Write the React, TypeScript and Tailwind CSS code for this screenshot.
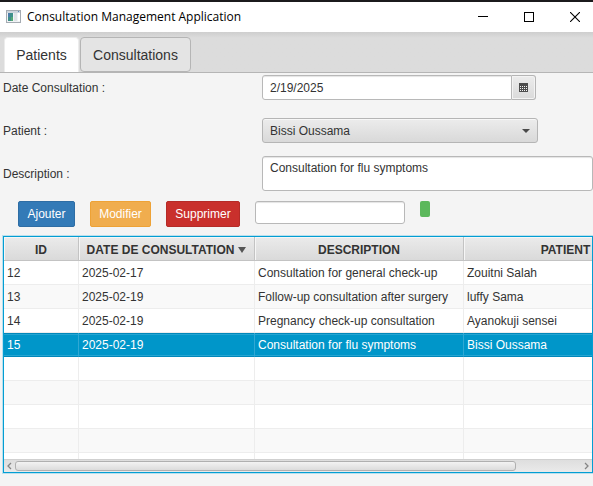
import React from "react";

type Consultation = { id: number; date: string; description: string; patient: string };

const consultations: Consultation[] = [
  { id: 12, date: "2025-02-17", description: "Consultation for general check-up", patient: "Zouitni Salah" },
  { id: 13, date: "2025-02-19", description: "Follow-up consultation after surgery", patient: "luffy Sama" },
  { id: 14, date: "2025-02-19", description: "Pregnancy check-up consultation", patient: "Ayanokuji sensei" },
  { id: 15, date: "2025-02-19", description: "Consultation for flu symptoms", patient: "Bissi Oussama" },
];

const selectedId = 15;
const emptyRows = [4, 5, 6, 7, 8];

function TitleBar() {
  return (
    <header className="flex h-8 shrink-0 items-center border-t-2 border-[#1b1a1c] bg-white pl-1.5 text-black">
      <svg width="15" height="14" viewBox="0 0 15 14" shapeRendering="crispEdges" aria-hidden="true">
        <rect x="0.5" y="0.5" width="14" height="12" fill="#f1f3f5" stroke="#a5abb2" />
        <rect x="1" y="1" width="13" height="2" fill="#cdd5dd" />
        <rect x="2" y="3" width="5" height="8" fill="#3f8f8b" />
        <rect x="2" y="3" width="2" height="4" fill="#4b7ea8" />
        <rect x="5" y="7" width="2" height="4" fill="#55a875" />
        <rect x="8" y="3" width="3" height="8" fill="#dfe3e6" />
        <rect x="12" y="3" width="2" height="8" fill="#ffffff" />
        <rect x="12" y="1" width="1" height="1" fill="#5b87b5" />
      </svg>
      <h1 className="ml-1.5 flex-1 whitespace-nowrap font-['Open_Sans','Noto_Sans',sans-serif] text-[12px]">
        Consultation Management Application
      </h1>
      <div className="flex h-full">
        <button aria-label="Minimize" className="flex w-[46px] items-center justify-center">
          <svg width="10" height="10" shapeRendering="crispEdges"><path d="M0 4h10v1H0z" /></svg>
        </button>
        <button aria-label="Maximize" className="flex w-[46px] items-center justify-center">
          <svg width="10" height="10" shapeRendering="crispEdges">
            <rect x="0.5" y="0.5" width="9" height="9" fill="none" stroke="#000" />
          </svg>
        </button>
        <button aria-label="Close" className="flex w-[41px] items-center justify-end pr-[13px]">
          <svg width="10" height="10"><path d="M0 0L10 10M10 0L0 10" stroke="#000" strokeWidth="1.1" /></svg>
        </button>
      </div>
    </header>
  );
}

function Tabs() {
  return (
    <div
      role="tablist"
      className="flex h-[41px] shrink-0 items-end border-b border-[#b5b5b5] bg-[#dcdcdc] bg-linear-to-b from-[#cecece] to-[#dcdcdc] to-15% pl-1 text-[14px]"
    >
      <button role="tab" aria-selected="true" className="h-[35px] w-[75px] rounded-t-[4px] border border-b-0 border-[#ececec] bg-white">
        Patients
      </button>
      <button role="tab" aria-selected="false" className="ml-px h-[35px] w-[111px] rounded-[4px] border border-[#b5b5b5] bg-[#e4e4e4] pt-px">
        Consultations
      </button>
    </div>
  );
}

function CalendarIcon() {
  return (
    <svg width="9" height="9" viewBox="0 0 9 9" shapeRendering="crispEdges" aria-hidden="true">
      <path d="M0 0h9v9H0z" fill="#4d4d4d" />
      <path
        d="M1 3h1v1H1zM3 3h1v1H3zM5 3h1v1H5zM7 3h1v1H7zM1 5h1v1H1zM3 5h1v1H3zM5 5h1v1H5zM7 5h1v1H7zM1 7h1v1H1zM3 7h1v1H3zM5 7h1v1H5zM7 7h1v1H7z"
        fill="#f4f4f4"
      />
    </svg>
  );
}

const fieldStyle = "border border-[#b8b8b8] bg-white outline-none shadow-[inset_0_2px_1px_-1px_#e4e4e4]";

function ConsultationForm() {
  return (
    <form className="flex shrink-0 flex-col pl-[3px] pt-0.5">
      <div className="flex h-[25px] items-center">
        <label htmlFor="date" className="w-[259px] shrink-0">Date Consultation :</label>
        <div className="flex h-full w-[274px]">
          <input id="date" type="text" defaultValue="2/19/2025" className={`min-w-0 flex-1 rounded-l-[3px] px-[7px] ${fieldStyle}`} />
          <button
            type="button"
            aria-label="Choose date"
            className="flex w-6 items-center justify-center rounded-r-[3px] border border-l-0 border-[#b5b5b5] bg-linear-to-b from-[#ececec] to-[#dadada] shadow-[inset_0_0_0_1px_#f3f3f3]"
          >
            <CalendarIcon />
          </button>
        </div>
      </div>
      <div className="mt-[18px] flex h-[25px] items-center">
        <label htmlFor="patient" className="w-[259px] shrink-0">Patient :</label>
        <div className="relative h-full w-[276px]">
          <select
            id="patient"
            defaultValue="Bissi Oussama"
            className="h-full w-full appearance-none rounded-[3px] border border-[#b5b5b5] bg-linear-to-b from-[#ececec] to-[#d9d9d9] px-[7px] shadow-[inset_0_1px_0_#f7f7f7] outline-none"
          >
            {consultations.map((c) => (
              <option key={c.id}>{c.patient}</option>
            ))}
          </select>
          <svg className="pointer-events-none absolute right-2 top-[11px]" width="8" height="4" aria-hidden="true">
            <path d="M0 0h8L4 4z" fill="#4a4a4a" />
          </svg>
        </div>
      </div>
      <div className="mt-[13px] flex h-[35px] items-center">
        <label htmlFor="description" className="w-[259px] shrink-0">Description :</label>
        <textarea
          id="description"
          defaultValue="Consultation for flu symptoms"
          className={`h-full min-w-0 flex-1 resize-none overflow-hidden rounded-[3px] px-[7px] py-[3px] leading-4 ${fieldStyle}`}
        />
      </div>
      <div className="mt-2.5 flex items-start gap-[15px] pl-[15px] text-white">
        <button type="button" className="h-[26px] w-[57px] rounded-[2px] border border-[#2e6da4] bg-[#337ab7]">Ajouter</button>
        <button type="button" className="h-[26px] w-[61px] rounded-[2px] border border-[#eea236] bg-[#f0ad4e]">Modifier</button>
        <button type="button" className="h-[26px] w-[74px] rounded-[2px] border border-[#b52b27] bg-[#c9302c]">Supprimer</button>
        <input type="text" aria-label="Search" className={`h-[23px] w-[150px] rounded-[3px] px-[7px] text-[#333] ${fieldStyle}`} />
        <button type="button" aria-label="Run search" className="h-4 w-2.5 rounded-[2px] bg-[#5cb85c]" />
      </div>
    </form>
  );
}

function ConsultationTable() {
  const head = "h-6 border-b border-r border-[#c3c3c3] p-0 pt-0.5 text-center font-bold shadow-[inset_1px_1px_0_#f6f6f6]";
  return (
    <section className="ml-[3px] mt-[9px] flex min-h-0 flex-1 flex-col border border-[#039ed3] bg-white shadow-[0_0_0_1px_#b9e0ee]">
      <div className="min-h-0 flex-1 overflow-hidden">
        <table className="w-[664px] table-fixed border-separate border-spacing-0 whitespace-nowrap">
          <colgroup>
            <col className="w-[75px]" />
            <col className="w-[176px]" />
            <col className="w-[209px]" />
            <col className="w-[204px]" />
          </colgroup>
          <thead className="bg-linear-to-b from-[#ebebeb] to-[#d9d9d9]">
            <tr>
              <th className={head}>ID</th>
              <th className={head} aria-sort="ascending">
                <span className="flex items-center justify-center gap-1">
                  DATE DE CONSULTATION
                  <svg width="8" height="6" aria-hidden="true"><path d="M0 0h8L4 6z" fill="#555" /></svg>
                </span>
              </th>
              <th className={head}>DESCRIPTION</th>
              <th className={head}>PATIENT</th>
            </tr>
          </thead>
          <tbody>
            {consultations.map((c, i) => {
              const selected = c.id === selectedId;
              const cell = selected
                ? "h-6 border-b border-r border-b-[#0088bb] border-r-[#30a8d4] py-0 pl-[3px] shadow-[inset_0_1px_0_#0088bb,inset_0_2px_0_#25a5d2,inset_0_-1px_0_#25a5d2]"
                : "h-6 border-b border-r border-[#ededed] py-0 pl-[3px]";
              return (
                <tr key={c.id} className={selected ? "bg-[#0096c9] text-white" : i % 2 ? "bg-[#f9f9f9]" : "bg-white"}>
                  <td className={cell}>{c.id}</td>
                  <td className={cell}>{c.date}</td>
                  <td className={cell}>{c.description}</td>
                  <td className={cell}>{c.patient}</td>
                </tr>
              );
            })}
            {emptyRows.map((i) => (
              <tr key={i} className={i % 2 ? "bg-[#f9f9f9]" : "bg-white"}>
                {[0, 1, 2, 3].map((n) => (
                  <td key={n} className="h-6 border-b border-r border-[#ededed] p-0" />
                ))}
              </tr>
            ))}
          </tbody>
        </table>
      </div>
      <div className="flex h-[13px] shrink-0 items-center border-t border-[#d0d0d0] bg-linear-to-b from-[#dedede] to-[#eaeaea]">
        <button aria-label="Scroll left" className="flex w-[11px] justify-center">
          <svg width="5" height="8" fill="none" stroke="#858585" strokeWidth="1.3"><path d="M4 1L1 4l3 3" /></svg>
        </button>
        <div className="flex-1">
          <div className="h-2.5 w-[88.5%] rounded-[3px] border border-[#b0b0b0] bg-linear-to-b from-[#f3f3f3] to-[#dcdcdc]" />
        </div>
        <button aria-label="Scroll right" className="flex w-[11px] justify-center">
          <svg width="5" height="8" fill="none" stroke="#858585" strokeWidth="1.3"><path d="M1 1l3 3-3 3" /></svg>
        </button>
      </div>
    </section>
  );
}

export default function App() {
  return (
    <div className="flex h-screen flex-col overflow-hidden bg-[#f4f4f4] pb-[13px] font-['Liberation_Sans',Arial,sans-serif] text-[12px] text-[#333]">
      <TitleBar />
      <Tabs />
      <ConsultationForm />
      <ConsultationTable />
    </div>
  );
}
